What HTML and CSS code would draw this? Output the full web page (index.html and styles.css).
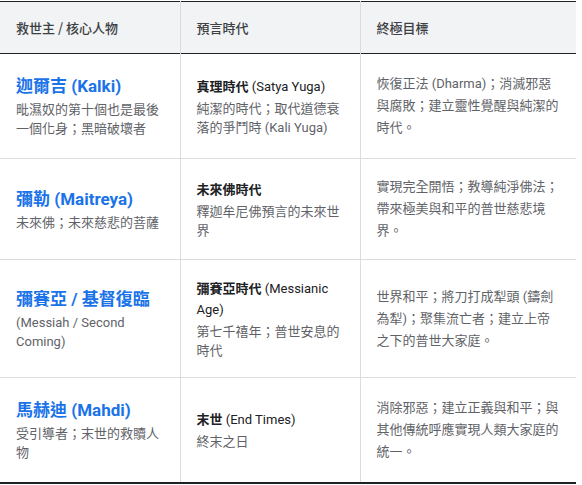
FILE: index.html
```html
<!DOCTYPE html>
<html lang="zh-Hant">
<head>
<meta charset="utf-8">
<link rel="stylesheet" href="styles.css">
</head>
<body>
<table class="grid">
  <colgroup>
    <col class="c1"><col class="c2"><col class="c3">
  </colgroup>
  <thead>
    <tr class="head">
      <th>救世主 / 核心人物</th>
      <th>預言時代</th>
      <th>終極目標</th>
    </tr>
  </thead>
  <tbody>
    <tr class="r1">
      <td><div class="name">迦爾吉 (Kalki)</div><div class="desc">毗濕奴的第十個也是最後一個化身；黑暗破壞者</div></td>
      <td><div class="era"><b>真理時代</b> (Satya Yuga)</div><div class="desc">純潔的時代；取代道德衰落的爭鬥時 (Kali Yuga)</div></td>
      <td><div class="goal">恢復正法 (Dharma)；消滅邪惡與腐敗；建立靈性覺醒與純潔的時代。</div></td>
    </tr>
    <tr class="r2">
      <td><div class="name">彌勒 (Maitreya)</div><div class="desc">未來佛；未來慈悲的菩薩</div></td>
      <td><div class="era"><b>未來佛時代</b></div><div class="desc">釋迦牟尼佛預言的未來世界</div></td>
      <td><div class="goal">實現完全開悟；教導純淨佛法；帶來極美與和平的普世慈悲境界。</div></td>
    </tr>
    <tr class="r3">
      <td><div class="name">彌賽亞 / 基督復臨</div><div class="desc">(Messiah / Second Coming)</div></td>
      <td><div class="era"><b>彌賽亞時代</b> (Messianic Age)</div><div class="desc">第七千禧年；普世安息的時代</div></td>
      <td><div class="goal">世界和平；將刀打成犁頭 (鑄劍為犁)；聚集流亡者；建立上帝之下的普世大家庭。</div></td>
    </tr>
    <tr class="r4">
      <td><div class="name">馬赫迪 (Mahdi)</div><div class="desc">受引導者；末世的救贖人物</div></td>
      <td><div class="era"><b>末世</b> (End Times)</div><div class="desc">終末之日</div></td>
      <td><div class="goal">消除邪惡；建立正義與和平；與其他傳統呼應實現人類大家庭的統一。</div></td>
    </tr>
  </tbody>
</table>
</body>
</html>
```

FILE: styles.css
```css
html, body {
  margin: 0;
  padding: 0;
  background: #ffffff;
}
body {
  padding-top: 1px;
  font-family: Roboto, "Noto Sans CJK TC", sans-serif;
  color: #5f6368;
}
.grid {
  width: 576px;
  border-collapse: collapse;
  table-layout: fixed;
  border-top: 1.5px solid #202124;
  border-bottom: 2px solid #202124;
}
.c1 { width: 180px; }
.c2 { width: 180px; }
.c3 { width: 216px; }
.grid th, .grid td {
  padding: 0 16px;
  vertical-align: middle;
  text-align: left;
}
.grid th + th, .grid td + td {
  border-left: 1px solid #dadce0;
}
.head {
  height: 52px;
  background: #f1f3f4;
  border-bottom: 1.5px solid #202124;
}
.head th {
  font-size: 13px;
  font-weight: 500;
  color: #3c4043;
  font-family: "Noto Sans CJK TC", sans-serif;
}
.grid tbody tr + tr {
  border-top: 1px solid #dadce0;
}
.r1 { height: 105px; }
.r2 { height: 101px; }
.r3 { height: 118px; }
.r4 { height: 105px; }
.name {
  font-size: 17px;
  line-height: 24px;
  font-weight: 700;
  color: #1a73e8;
  margin-bottom: 2px;
}
.desc {
  font-size: 13px;
  line-height: 19px;
  color: #5f6368;
}
.era {
  font-size: 13px;
  line-height: 21px;
  color: #202124;
  margin-bottom: 2px;
}
.era b {
  font-weight: 700;
}
.goal {
  font-size: 13px;
  line-height: 22px;
  color: #5f6368;
}
```
